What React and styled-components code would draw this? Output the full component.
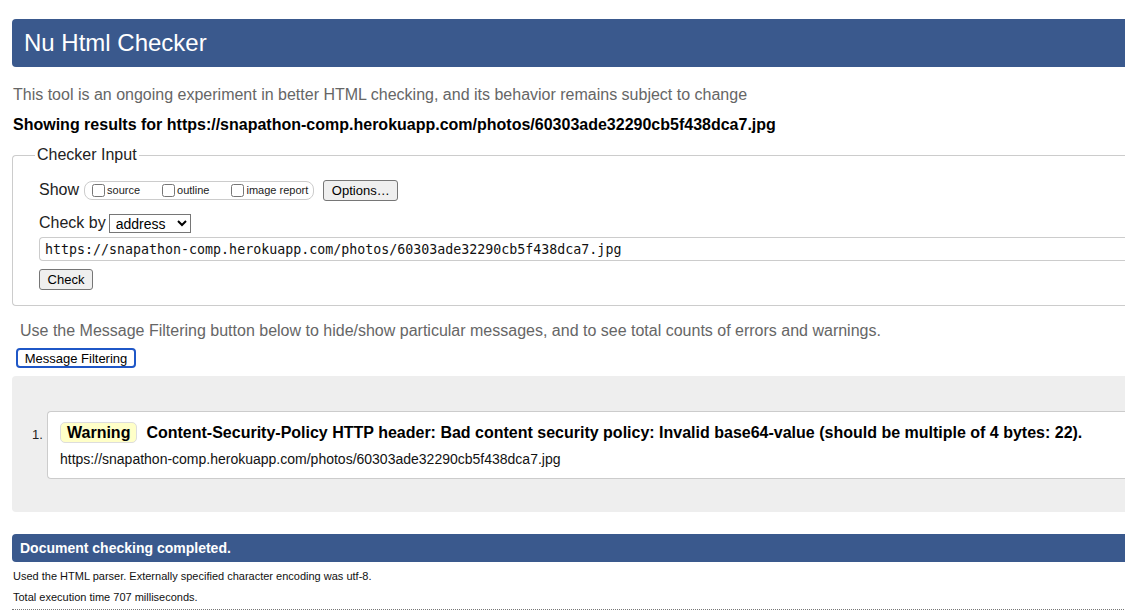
import React from 'react';
import styled, { createGlobalStyle } from 'styled-components';

const GlobalStyle = createGlobalStyle`
  html, body {
    margin: 0;
    padding: 0;
    overflow: hidden;
    background: #fff;
  }
  body {
    font-family: "Liberation Sans", Arial, sans-serif;
    color: #000;
  }
`;

const URL = 'https://snapathon-comp.herokuapp.com/photos/60303ade32290cb5f438dca7.jpg';

const App = () => {
  return (
    <>
      <GlobalStyle />
      <Page>
        <Title>Nu Html Checker</Title>
        <Intro>This tool is an ongoing experiment in better HTML checking, and its behavior remains subject to change</Intro>
        <ResultsFor>Showing results for {URL}</ResultsFor>

        <Fieldset>
          <Legend>Checker Input</Legend>
          <Row>
            <Label>Show</Label>
            <Options>
              <Option>
                <input type="checkbox" />
                source
              </Option>
              <Option>
                <input type="checkbox" />
                outline
              </Option>
              <Option>
                <input type="checkbox" />
                image report
              </Option>
            </Options>
            <Button $w={75}>Options…</Button>
          </Row>
          <Row $mt={11}>
            <Label $gap={3}>Check by</Label>
            <Select defaultValue="address">
              <option value="address">address</option>
              <option value="file">file upload</option>
              <option value="text">text input</option>
            </Select>
          </Row>
          <UrlInput defaultValue={URL} />
          <Button $w={54}>Check</Button>
        </Fieldset>

        <Hint>Use the Message Filtering button below to hide/show particular messages, and to see total counts of errors and warnings.</Hint>
        <FilterButton>Message Filtering</FilterButton>

        <Results>
          <Item>
            <Num>1.</Num>
            <Message>
              <MessageLine>
                <Badge>Warning</Badge>
                <strong>Content-Security-Policy HTTP header: Bad content security policy: Invalid base64-value (should be multiple of 4 bytes: 22).</strong>
              </MessageLine>
              <Location>{URL}</Location>
            </Message>
          </Item>
        </Results>

        <Done>Document checking completed.</Done>
        <Small>Used the HTML parser. Externally specified character encoding was utf-8.</Small>
        <Small>Total execution time 707 milliseconds.</Small>
        <Rule />
      </Page>
    </>
  );
};

const Page = styled.div`
  width: 1160px;
  padding: 19px 0 0 12px;
`;

const Title = styled.h1`
  margin: 0;
  height: 48px;
  line-height: 48px;
  padding-left: 12px;
  background: #3a598d;
  color: #fff;
  font-size: 24px;
  font-weight: normal;
  border-radius: 4px 0 0 4px;
`;

const Intro = styled.p`
  margin: 19px 0 0 1px;
  font-size: 16px;
  line-height: 18px;
  color: #666;
`;

const ResultsFor = styled.p`
  margin: 12px 0 0 1px;
  font-size: 16px;
  line-height: 18px;
  font-weight: bold;
`;

const Fieldset = styled.fieldset`
  margin: 12px 0 0;
  padding: 15px 0 15px 26px;
  border: 1px solid #ccc;
  border-right: none;
  border-radius: 4px 0 0 4px;
  min-inline-size: 0;
`;

const Legend = styled.legend`
  margin-left: -4px;
  padding: 0 2px;
  font-size: 16px;
  line-height: 18px;
  color: #222;
`;

const Row = styled.div`
  display: flex;
  align-items: center;
  margin-top: ${(p) => p.$mt || 0}px;
  height: 22px;
`;

const Label = styled.span`
  font-size: 16px;
  color: #222;
  margin-right: ${(p) => p.$gap ?? 5}px;
`;

const Options = styled.span`
  display: inline-flex;
  align-items: center;
  height: 17px;
  padding: 0 5px 0 5px;
  border: 1px solid #ccc;
  border-radius: 8px;
  margin-right: 9px;
`;

const Option = styled.label`
  display: inline-flex;
  align-items: center;
  font-size: 11px;
  color: #222;
  margin-right: 20px;
  &:last-child {
    margin-right: 0;
  }
  input {
    margin: 0 2px 0 2px;
    width: 13px;
    height: 13px;
  }
`;

const Button = styled.button`
  width: ${(p) => p.$w}px;
  height: 21px;
  padding: 0;
  font-family: "Liberation Sans", Arial, sans-serif;
  font-size: 13px;
  color: #000;
  background: #efefef;
  border: 1px solid #767676;
  border-radius: 3px;
`;

const Select = styled.select`
  width: 82px;
  height: 19px;
  font-family: "Liberation Sans", Arial, sans-serif;
  font-size: 14px;
  border: 1px solid #767676;
  border-radius: 0;
  background: #fff;
  padding: 0 0 0 2px;
`;

const UrlInput = styled.input`
  display: block;
  box-sizing: border-box;
  width: 100%;
  height: 24px;
  margin: 3px 0 8px;
  padding: 0 5px;
  font-family: "DejaVu Sans Mono", "Liberation Mono", monospace;
  font-size: 13.3px;
  color: #111;
  border: 1px solid #ccc;
  border-right: none;
  border-radius: 4px 0 0 4px;
  outline: none;
`;

const Hint = styled.p`
  margin: 16px 0 0 8px;
  font-size: 16px;
  line-height: 18px;
  color: #666;
`;

const FilterButton = styled.button`
  display: block;
  margin: 8px 0 0 4px;
  height: 20px;
  width: 120px;
  padding: 0;
  font-family: "Liberation Sans", Arial, sans-serif;
  font-size: 13px;
  color: #000;
  background: #fff;
  border: 2px solid #1f57c7;
  border-radius: 4px;
`;

const Results = styled.div`
  margin-top: 8px;
  padding: 35px 0 33px 20px;
  background: #eee;
  border-radius: 4px 0 0 4px;
`;

const Item = styled.div`
  display: flex;
  align-items: flex-start;
`;

const Num = styled.span`
  width: 15px;
  padding-top: 16px;
  font-size: 13px;
  color: #222;
`;

const Message = styled.div`
  flex: 1;
  box-sizing: border-box;
  height: 68px;
  padding: 10px 0 0 12px;
  background: #fff;
  border: 1px solid #ccc;
  border-right: none;
  border-radius: 4px 0 0 4px;
`;

const MessageLine = styled.div`
  display: flex;
  align-items: center;
  font-size: 16px;
  white-space: nowrap;
`;

const Badge = styled.span`
  display: inline-block;
  height: 19px;
  line-height: 19px;
  padding: 0 6px;
  margin-right: 9px;
  background: #ffffc8;
  border: 1px solid #ddd;
  border-radius: 5px;
  font-weight: bold;
`;

const Location = styled.div`
  margin-top: 8px;
  font-size: 14px;
  color: #111;
`;

const Done = styled.div`
  margin-top: 22px;
  height: 28px;
  line-height: 28px;
  padding-left: 8px;
  background: #3a598d;
  color: #fff;
  font-size: 14px;
  font-weight: bold;
  border-radius: 4px 0 0 4px;
`;

const Small = styled.p`
  margin: 7px 0 0 1px;
  font-size: 11px;
  line-height: 14px;
  color: #111;
`;

const Rule = styled.hr`
  margin: 5px 0 0;
  border: none;
  border-top: 1px dotted #777;
`;

export default App;
